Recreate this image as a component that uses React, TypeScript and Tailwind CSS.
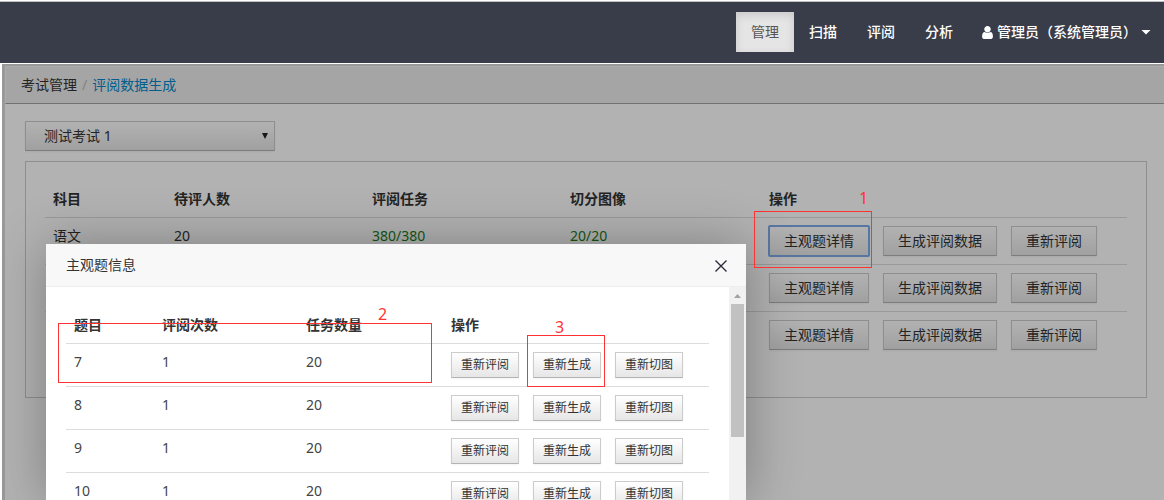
import type { ReactNode } from 'react'
import { clsx } from 'clsx'

const navItems = ['管理', '扫描', '评阅', '分析']

const subjects = [
  { name: '语文', people: '20', tasks: '380/380', images: '20/20' },
  { name: '', people: '', tasks: '', images: '' },
  { name: '', people: '', tasks: '', images: '' },
]

const questions = [
  { id: 7, times: 1, count: 20 },
  { id: 8, times: 1, count: 20 },
  { id: 9, times: 1, count: 20 },
  { id: 10, times: 1, count: 20 },
]

interface ActionButtonProps {
  children: ReactNode;
  small?: boolean;
  focused?: boolean;
}

function ActionButton({ children, small, focused }: ActionButtonProps) {
  return (
    <button
      type="button"
      className={clsx(
        'block shrink-0 whitespace-nowrap border border-[#ccc] border-b-[#b3b3b3] bg-linear-to-b from-white to-[#e6e6e6] text-[#333] shadow-[0_1px_2px_rgba(0,0,0,0.05)]',
        small ? 'h-[26px] px-[9px] text-xs' : 'h-[30px] px-[14px] text-sm',
        focused && 'rounded-[1px] outline-2 -outline-offset-1 outline-[#7fa9e8]'
      )}
    >
      {children}
    </button>
  )
}

function UserIcon() {
  return (
    <svg viewBox="0 128 1280 1536" className="h-[13px] w-[11px] fill-white" aria-hidden="true">
      <path d="M1280 1399q0 109-62.5 187t-150.5 78h-854q-88 0-150.5-78t-62.5-187q0-85 8.5-160.5t31.5-152 58.5-131 94-89 134.5-34.5q131 128 313 128t313-128q76 0 134.5 34.5t94 89 58.5 131 31.5 152 8.5 160.5zm-256-887q0 159-112.5 271.5t-271.5 112.5-271.5-112.5-112.5-271.5 112.5-271.5 271.5-112.5 271.5 112.5 112.5 271.5z" />
    </svg>
  )
}

function Header() {
  return (
    <header className="border-t border-white bg-[#393d49]">
      <nav className="flex h-[62px] items-start justify-end border-t border-[#bfc1c5] pt-[10px] text-sm text-white">
        {navItems.map((item, i) => (
          <a
            key={item}
            href="#"
            className={clsx(
              'px-[15px] leading-10',
              i === 0 ? 'bg-[#e5e5e5] text-[#555] shadow-[inset_0_3px_8px_rgba(0,0,0,0.125)]' : 'font-medium'
            )}
          >
            {item}
          </a>
        ))}
        <a href="#" className="flex items-center gap-1 pl-[14px] pr-[13px] font-medium leading-10">
          <UserIcon />
          <span>管理员（系统管理员）</span>
          <svg viewBox="0 0 10 5" className="h-[5px] w-[10px] fill-white" aria-hidden="true">
            <path d="M0.5 0h9L5 4.6z" />
          </svg>
        </a>
      </nav>
    </header>
  )
}

function SubjectTable() {
  return (
    <table className="mb-5 w-full table-fixed text-left text-sm leading-5 text-[#333]">
      <thead>
        <tr>
          <th className="w-[121px] p-2">科目</th>
          <th className="w-[198px] p-2">待评人数</th>
          <th className="w-[198px] p-2">评阅任务</th>
          <th className="w-[199px] p-2">切分图像</th>
          <th className="p-2">操作</th>
        </tr>
      </thead>
      <tbody>
        {subjects.map((s, i) => (
          <tr key={i} className="border-t border-[#ddd] align-top">
            <td className="p-2">{s.name}</td>
            <td className="p-2">{s.people}</td>
            <td className="p-2 text-[#1a7f1a]">{s.tasks}</td>
            <td className="p-2 text-[#1a7f1a]">{s.images}</td>
            <td className="p-2">
              <div className="flex gap-[14px]">
                <ActionButton focused={i === 0}>主观题详情</ActionButton>
                <ActionButton>生成评阅数据</ActionButton>
                <ActionButton>重新评阅</ActionButton>
              </div>
            </td>
          </tr>
        ))}
      </tbody>
    </table>
  )
}

function QuestionTable() {
  return (
    <table className="w-full table-fixed text-left text-sm leading-5 text-[#333]">
      <thead>
        <tr>
          <th className="w-[88px] p-2">题目</th>
          <th className="w-[144px] p-2">评阅次数</th>
          <th className="w-[145px] p-2">任务数量</th>
          <th className="p-2">操作</th>
        </tr>
      </thead>
      <tbody>
        {questions.map((q) => (
          <tr key={q.id} className="border-t border-[#ddd] align-top text-[#444]">
            <td className="p-2">{q.id}</td>
            <td className="p-2">{q.times}</td>
            <td className="p-2">{q.count}</td>
            <td className="p-2">
              <div className="flex gap-[14px]">
                <ActionButton small>重新评阅</ActionButton>
                <ActionButton small>重新生成</ActionButton>
                <ActionButton small>重新切图</ActionButton>
              </div>
            </td>
          </tr>
        ))}
      </tbody>
    </table>
  )
}

function QuestionDialog() {
  return (
    <section
      role="dialog"
      aria-labelledby="dialog-title"
      className="absolute bottom-0 left-[46px] top-[244px] flex w-[700px] flex-col bg-white shadow-[1px_1px_50px_rgba(0,0,0,0.3)]"
    >
      <div className="flex h-[43px] shrink-0 items-center justify-between border-b border-[#eee] bg-[#f8f8f8] pl-5 pr-[19px]">
        <h2 id="dialog-title" className="text-sm text-[#333]">主观题信息</h2>
        <button type="button" aria-label="关闭" className="pt-[2px]">
          <svg viewBox="0 0 12 12" className="size-3 stroke-[#2d2c3b]" strokeWidth="1.4" aria-hidden="true">
            <path d="M0.5 0.5l11 11M11.5 0.5l-11 11" />
          </svg>
        </button>
      </div>
      <div className="flex min-h-0 flex-1">
        <div className="flex-1 overflow-hidden p-5">
          <QuestionTable />
        </div>
        {/* Barra de rolagem */}
        <div className="flex w-[17px] flex-col items-center bg-[#f1f1f1]">
          <div className="flex h-[17px] items-center">
            <svg viewBox="0 0 7 4" className="h-1 w-[7px] fill-[#a3a3a3]" aria-hidden="true">
              <path d="M3.5 0L7 4H0z" />
            </svg>
          </div>
          <div className="h-[133px] w-[13px] bg-[#c1c1c1]" />
        </div>
      </div>
    </section>
  )
}

// Marcações numeradas por cima da tela
function Marks() {
  return (
    <div className="pointer-events-none text-base leading-4 text-[#ff3333]">
      <div className="absolute left-[754px] top-[211px] h-[57px] w-[118px] border border-[#f33]" />
      <span className="absolute left-[859px] top-[190px]">1</span>
      <div className="absolute left-[58px] top-[323px] h-[60px] w-[374px] border border-[#f33]" />
      <span className="absolute left-[378px] top-[306px]">2</span>
      <div className="absolute left-[527px] top-[335px] h-[52px] w-[78px] border border-[#f33]" />
      <span className="absolute left-[555px] top-[319px]">3</span>
    </div>
  )
}

export default function App() {
  return (
    <div className="relative flex h-screen flex-col overflow-hidden bg-white font-['Noto_Sans','Noto_Sans_CJK_SC',sans-serif]">
      <Header />
      <main className="relative ml-[2px] mt-px flex-1 border-l-[3px] border-t-2 border-[#dbdbdb] bg-white">
        <div className="flex h-[38px] items-center gap-[5px] border-b border-l border-t border-b-[#a4a4a4] border-l-[#f8f8f8] border-t-[#f8f8f8] bg-[#ededed] pl-[15px] text-sm">
          <a href="#" className="text-[#333]">考试管理</a>
          <span className="text-[#bbb]">/</span>
          <a href="#" className="text-[#0088cc]">评阅数据生成</a>
        </div>
        <div className="pl-5 pr-[17px] pt-[17px]">
          <div className="relative w-[250px]">
            <select
              aria-label="考试"
              className="block h-[30px] w-full appearance-none border border-[#ccc] border-b-[#b3b3b3] bg-linear-to-b from-white to-[#e6e6e6] pl-[18px] text-sm text-[#333] shadow-[0_1px_2px_rgba(0,0,0,0.05)]"
            >
              <option>测试考试 1</option>
            </select>
            <svg viewBox="0 0 6 6" className="pointer-events-none absolute right-[7px] top-3 size-[6px] fill-[#222]" aria-hidden="true">
              <path d="M0 0h6L3 6z" />
            </svg>
          </div>
          <div className="mt-[10px] border border-[#ccc] p-[19px]">
            <SubjectTable />
          </div>
        </div>
        <div className="absolute -left-[3px] -top-[2px] bottom-0 right-0 bg-black/30" />
      </main>
      <QuestionDialog />
      <Marks />
    </div>
  )
}
